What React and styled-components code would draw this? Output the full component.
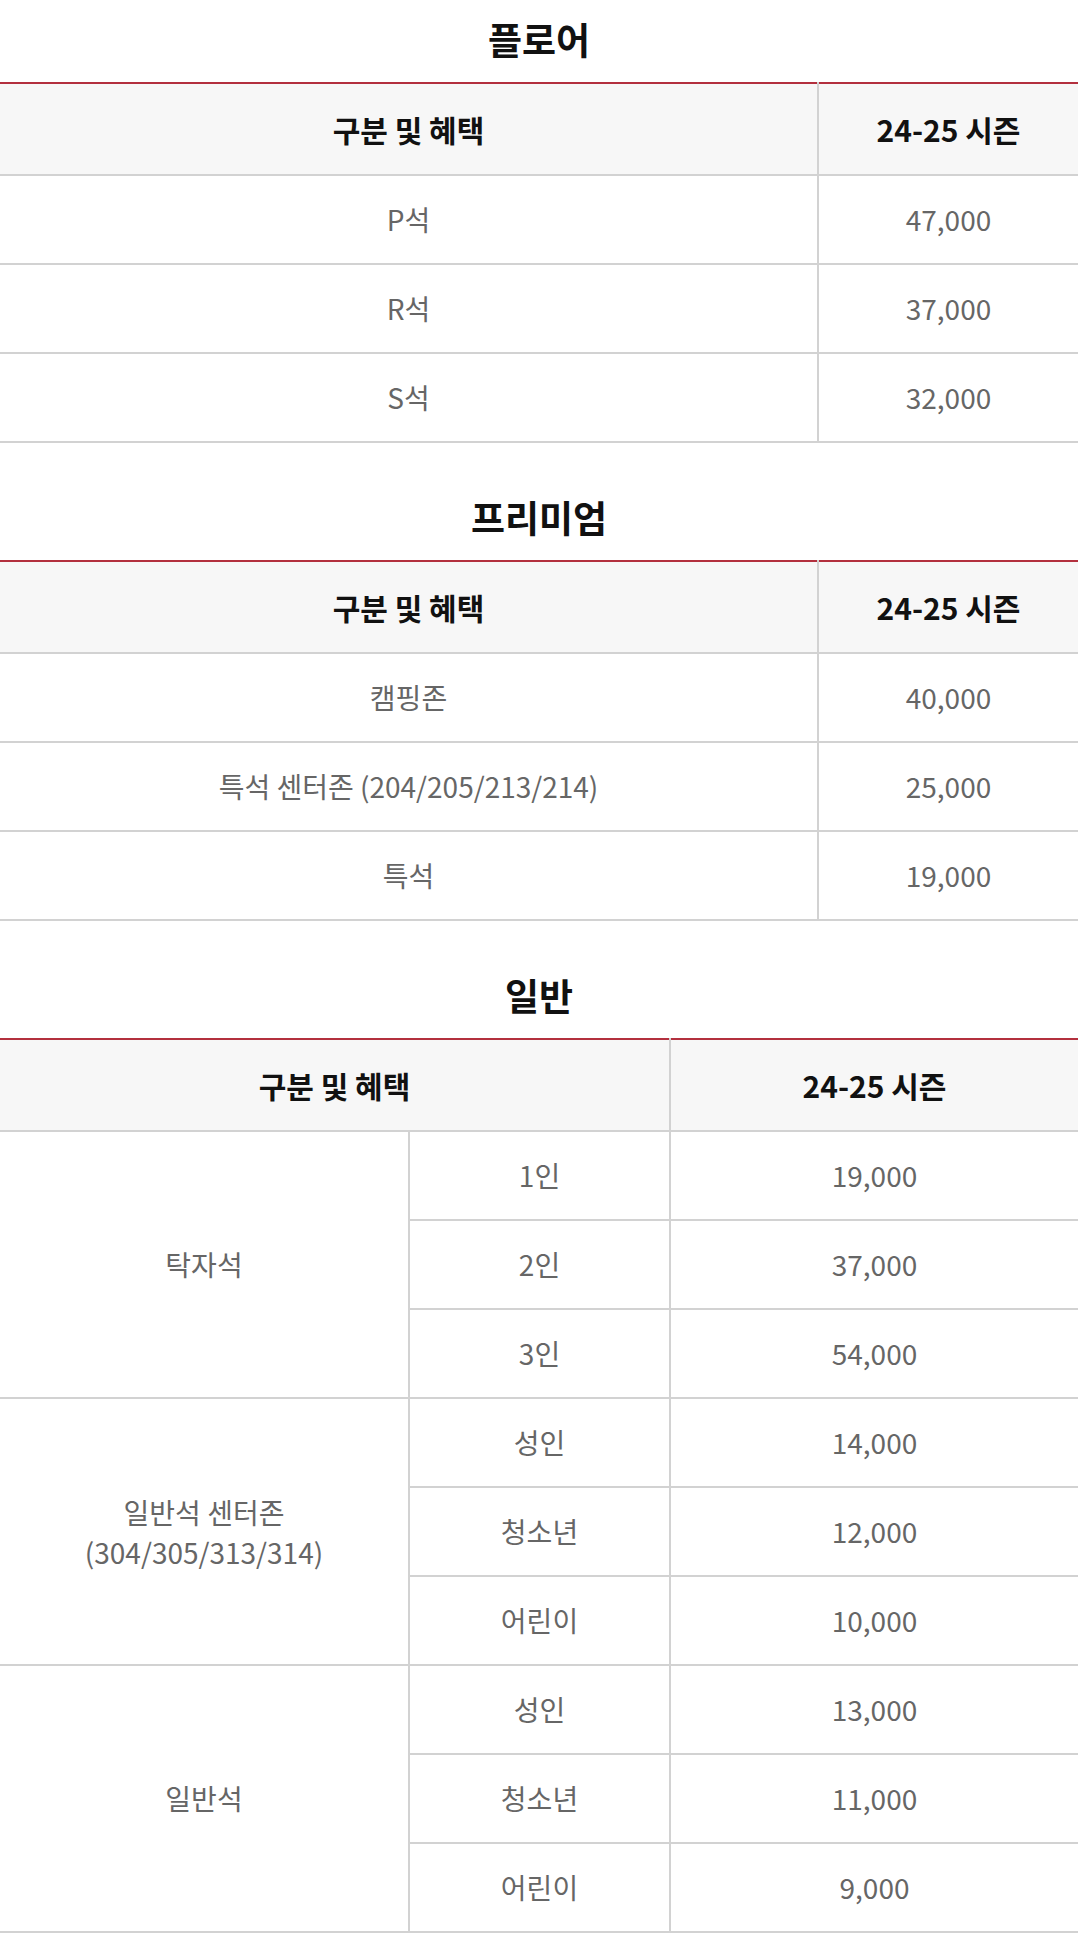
import React from 'react';
import styled, { createGlobalStyle } from 'styled-components';

const GlobalStyle = createGlobalStyle`
    html, body {
        margin: 0;
        padding: 0;
        background: #fff;
    }
    body {
        font-family: "Noto Sans CJK KR", "Noto Sans", sans-serif;
    }
`

const Page = styled.div`
    width: 1078px;
    padding-bottom: 10px;
`

const Section = styled.section`
    margin-top: ${props => props.first ? '14px' : '49px'};
`

const Title = styled.h2`
    margin: 0 0 18px;
    height: 50px;
    line-height: 50px;
    text-align: center;
    font-size: 37px;
    font-weight: 700;
    color: #111;
`

const Table = styled.table`
    width: 100%;
    border-collapse: collapse;
    table-layout: fixed;
    border-top: 2px solid #b3303e;
    border-bottom: 2px solid #d2d2d2;
`

const Th = styled.th`
    height: 90px;
    padding: 0;
    background: #f7f7f7;
    border-bottom: 2px solid #d2d2d2;
    border-left: ${props => props.first ? 'none' : '2px solid #d2d2d2'};
    font-size: 30px;
    font-weight: 700;
    color: #111;
    text-align: center;
    vertical-align: middle;
`

const Td = styled.td`
    height: 87px;
    padding: 0;
    border-top: 2px solid #d2d2d2;
    border-left: ${props => props.first ? 'none' : '2px solid #d2d2d2'};
    font-size: 28px;
    line-height: ${props => props.multi ? '40px' : '35px'};
    color: #666;
    text-align: center;
    vertical-align: middle;
`

const simpleSections = [
    {
        title: '플로어',
        rows: [['P석', '47,000'], ['R석', '37,000'], ['S석', '32,000']]
    },
    {
        title: '프리미엄',
        rows: [['캠핑존', '40,000'], ['특석 센터존 (204/205/213/214)', '25,000'], ['특석', '19,000']]
    }
]

const groups = [
    { name: ['탁자석'], rows: [['1인', '19,000'], ['2인', '37,000'], ['3인', '54,000']] },
    { name: ['일반석 센터존', '(304/305/313/314)'], rows: [['성인', '14,000'], ['청소년', '12,000'], ['어린이', '10,000']] },
    { name: ['일반석'], rows: [['성인', '13,000'], ['청소년', '11,000'], ['어린이', '9,000']] }
]

function SimpleTable({ title, rows, first }) {
    return (
        <Section first={first}>
            <Title>{title}</Title>
            <Table>
                <colgroup>
                    <col style={{ width: '818px' }} />
                    <col />
                </colgroup>
                <thead>
                    <tr>
                        <Th first>구분 및 혜택</Th>
                        <Th>24-25 시즌</Th>
                    </tr>
                </thead>
                <tbody>
                    {rows.map(r => (
                        <tr key={r[0]}>
                            <Td first>{r[0]}</Td>
                            <Td>{r[1]}</Td>
                        </tr>
                    ))}
                </tbody>
            </Table>
        </Section>
    )
}

export default function App() {
    return (
        <Page>
            <GlobalStyle />
            {simpleSections.map((s, i) => (
                <SimpleTable key={s.title} title={s.title} rows={s.rows} first={i === 0} />
            ))}
            <Section>
                <Title>일반</Title>
                <Table>
                    <colgroup>
                        <col style={{ width: '409px' }} />
                        <col style={{ width: '261px' }} />
                        <col />
                    </colgroup>
                    <thead>
                        <tr>
                            <Th first colSpan={2}>구분 및 혜택</Th>
                            <Th>24-25 시즌</Th>
                        </tr>
                    </thead>
                    <tbody>
                        {groups.map(g => g.rows.map((r, i) => (
                            <tr key={g.name[0] + r[0]}>
                                {i === 0 && (
                                    <Td first multi={g.name.length > 1} rowSpan={g.rows.length}>
                                        {g.name.map((line, j) => (
                                            <React.Fragment key={line}>
                                                {j > 0 && <br />}
                                                {line}
                                            </React.Fragment>
                                        ))}
                                    </Td>
                                )}
                                <Td>{r[0]}</Td>
                                <Td>{r[1]}</Td>
                            </tr>
                        )))}
                    </tbody>
                </Table>
            </Section>
        </Page>
    )
}
